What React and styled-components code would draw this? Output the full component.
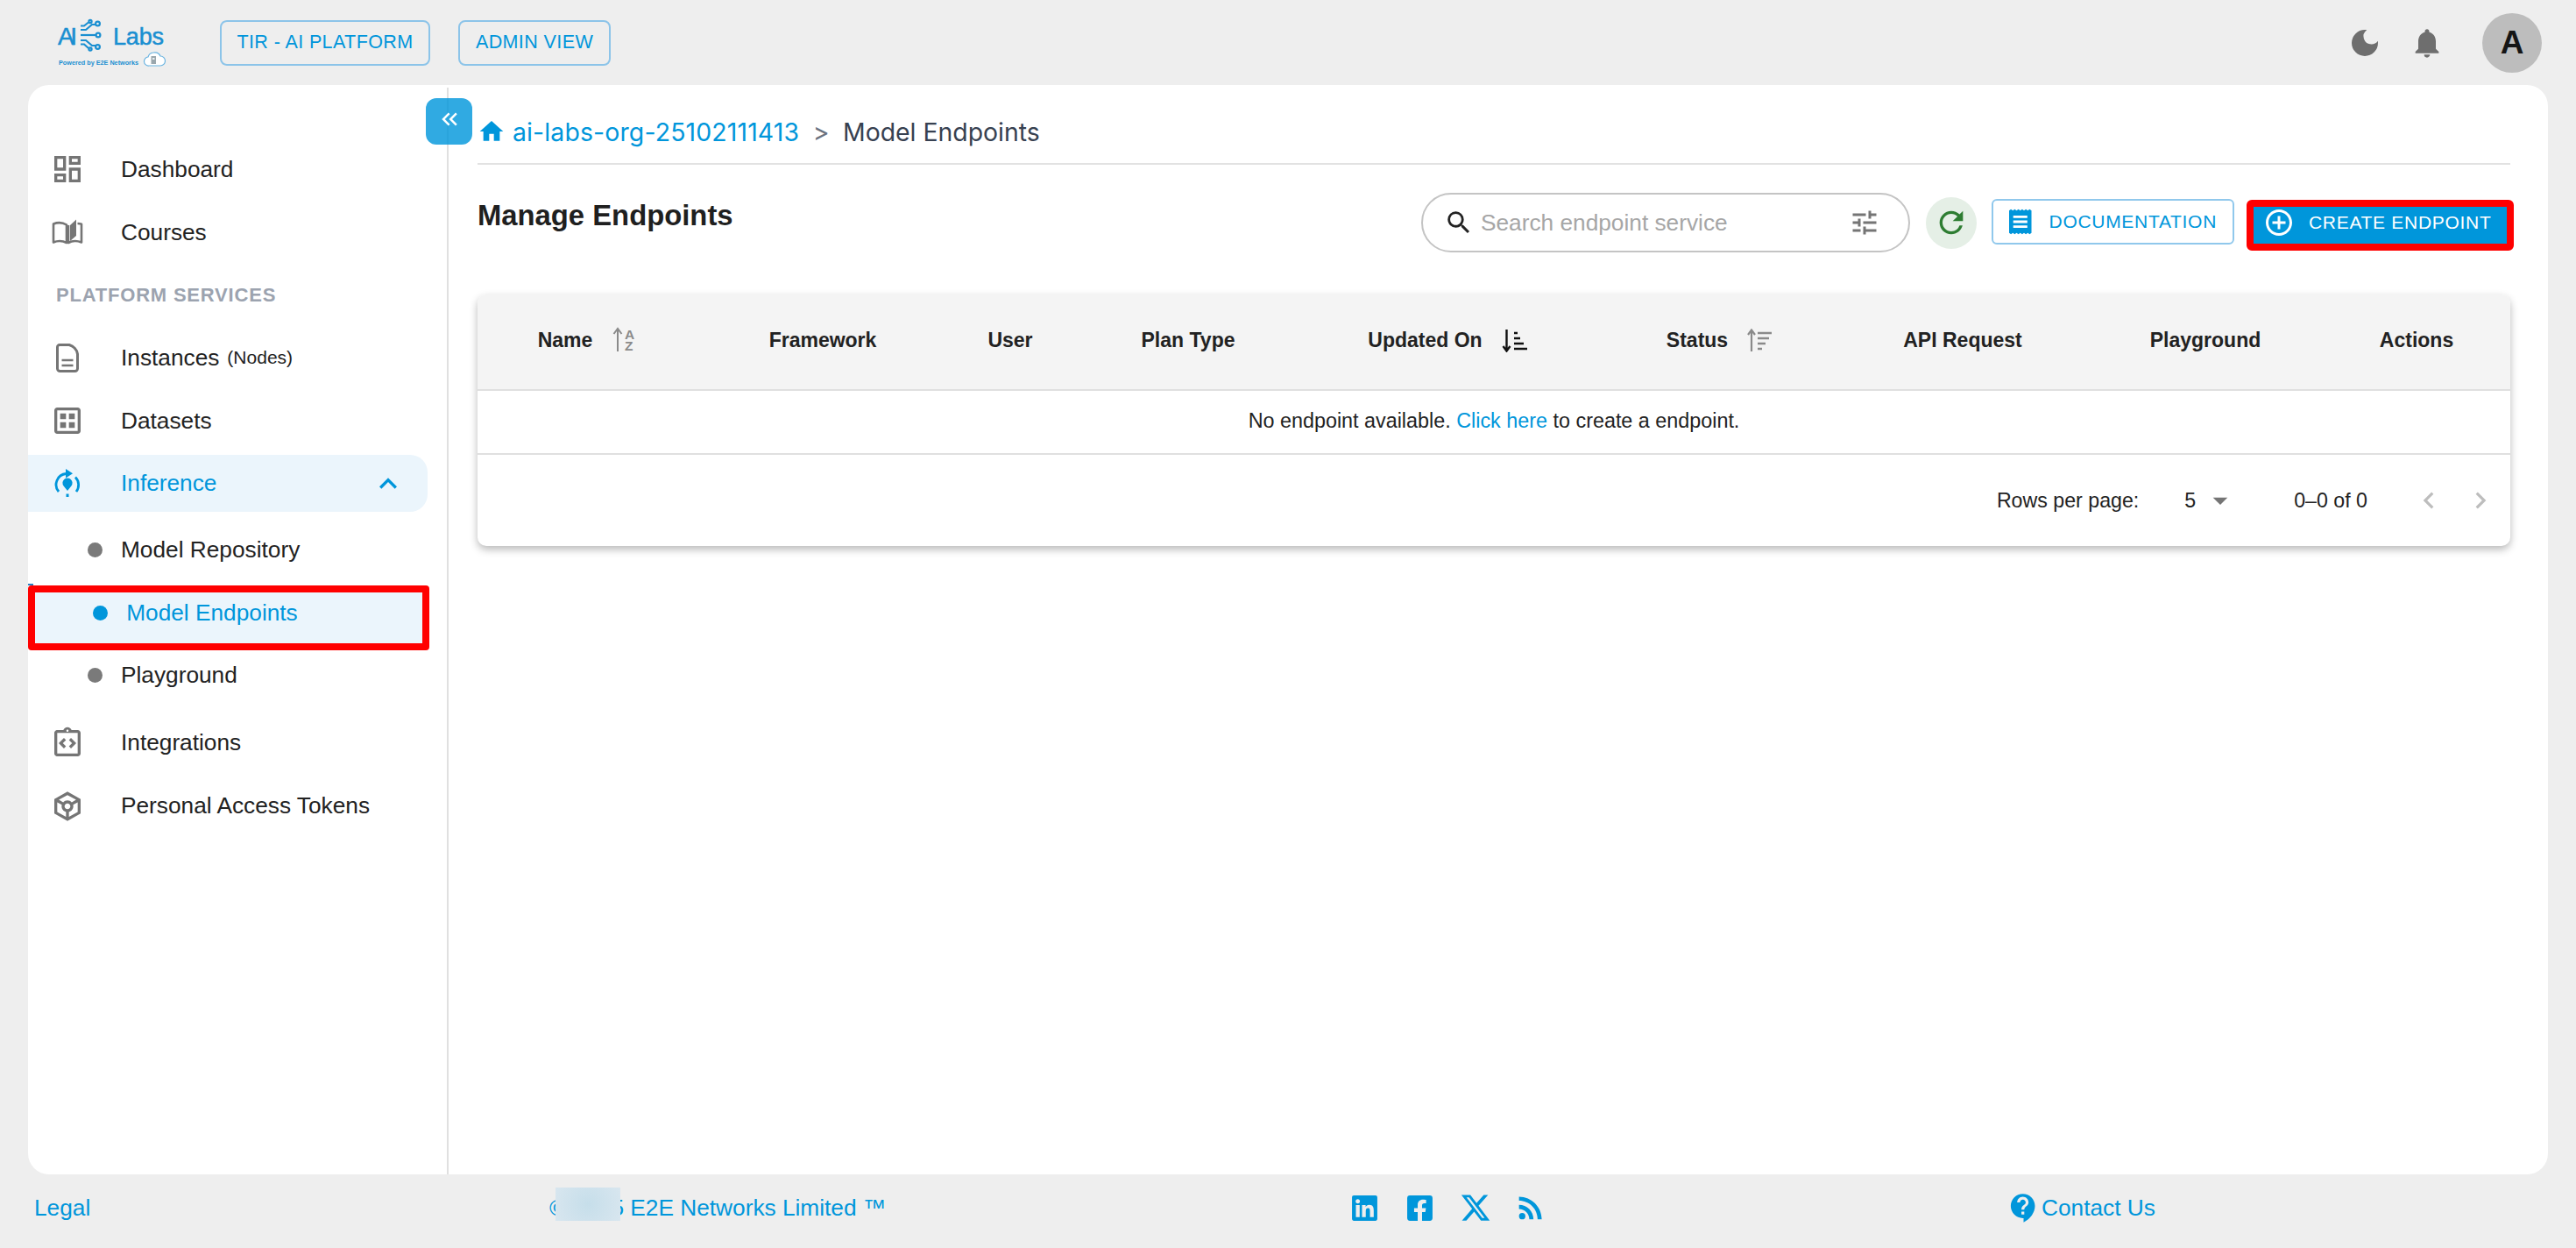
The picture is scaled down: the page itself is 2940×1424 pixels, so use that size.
import React from "react";
import styled, { createGlobalStyle } from "styled-components";
import {
  MdOutlineDashboard, MdOutlineDataset, MdOutlineIntegrationInstructions, MdOutlineToken,
  MdExpandLess, MdDarkMode, MdNotifications, MdKeyboardDoubleArrowLeft, MdHome, MdSearch,
  MdTune, MdRefresh, MdAddCircleOutline, MdArrowDropDown, MdChevronLeft, MdChevronRight,
  MdRssFeed, MdContactSupport,
} from "react-icons/md";
import { FaLinkedin, FaFacebookSquare } from "react-icons/fa";
import { FaXTwitter } from "react-icons/fa6";

const BLUE = "#0096db";
const SANS = '"Liberation Sans", Arial, sans-serif';

const Global = createGlobalStyle`
  html, body { margin: 0; height: 100%; overflow: hidden; background: #eeeeee; }
  #root { height: 100%; }
  * { box-sizing: border-box; }
`;

const Page = styled.div`
  height: 100vh;
  display: flex;
  flex-direction: column;
  font-family: ${SANS};
  color: #222;
  background: #eeeeee;
`;

/* Header */
const Header = styled.header`
  height: 97px;
  flex: none;
  display: flex;
  align-items: center;
  padding: 0 39px 0 50px;
`;
const LogoSvg = styled.svg`
  width: 180px;
  height: 80px;
  flex: none;
  margin-right: 21px;
`;
const HeaderChip = styled.button`
  height: 52px;
  width: ${(p) => p.$w}px;
  margin-right: 32px;
  padding: 0;
  border: 2px solid #8cc4e9;
  border-radius: 8px;
  background: transparent;
  color: ${BLUE};
  font: 21.5px ${SANS};
  letter-spacing: 0.4px;
`;
const HeaderRight = styled.div`
  margin-left: auto;
  display: flex;
  align-items: center;
  color: #6e6e6e;
  font-size: 40px;
  line-height: 0;
`;
const HeaderIcon = styled.span`
  display: flex;
  margin-right: ${(p) => p.$mr}px;
`;
const Avatar = styled.div`
  width: 68px;
  height: 68px;
  border-radius: 50%;
  background: #bdbdbd;
  color: #151515;
  display: flex;
  align-items: center;
  justify-content: center;
  font: 700 37px ${SANS};
  line-height: 1;
`;

/* Card */
const Card = styled.div`
  flex: 1;
  min-height: 0;
  margin: 0 32px;
  background: #fff;
  border-radius: 24px;
  display: flex;
  position: relative;
`;
const CollapseBtn = styled.button`
  position: absolute;
  left: 454px;
  top: 15px;
  width: 53px;
  height: 53px;
  padding: 0 0 6px;
  border: 0;
  border-radius: 12px;
  background: rgba(0, 150, 219, 0.81);
  color: #fff;
  display: flex;
  align-items: center;
  justify-content: center;
  font-size: 30px;
`;

/* Sidebar */
const Sidebar = styled.nav`
  width: 480px;
  flex: none;
  margin-top: 3px;
  padding-top: 57px;
  border-right: 2px solid #e0e0e0;
`;
const NavRow = styled.div`
  height: 72px;
  display: flex;
  align-items: center;
  padding-left: 25px;
  font-size: 26.25px;
  color: #222;
`;
const NavIcon = styled.span`
  width: 40px;
  height: 40px;
  flex: none;
  display: flex;
  align-items: center;
  justify-content: center;
  color: ${(p) => (p.$active ? BLUE : "#757575")};
  font-size: 40px;
  margin-right: 41px;
`;
const SectionLabel = styled.div`
  height: 71px;
  display: flex;
  align-items: center;
  padding-left: 32px;
  font-size: 22px;
  font-weight: 700;
  letter-spacing: 0.8px;
  color: #9ca3af;
`;
const Small = styled.span`
  font-size: 21px;
  margin-left: 9px;
`;
const InferenceRow = styled.div`
  height: 65px;
  width: 456px;
  margin-top: 3px;
  display: flex;
  align-items: center;
  padding: 0 25px;
  background: #ebf5fc;
  border-radius: 0 20px 20px 0;
  font-size: 26.25px;
  color: ${BLUE};
`;
const Chevron = styled.span`
  margin-left: auto;
  display: flex;
  font-size: 40px;
`;
const SubList = styled.div`
  margin-top: 8px;
  margin-bottom: 5px;
`;
const SubRow = styled.div`
  height: 71.5px;
  display: flex;
  align-items: center;
  padding-left: ${(p) => (p.$active ? 73.7 : 67.5)}px;
  font-size: 26.25px;
  color: ${(p) => (p.$active ? BLUE : "#222")};
  position: relative;
`;
const RedFrame = styled.span`
  position: absolute;
  left: 0;
  top: 4px;
  width: 458px;
  height: 74px;
  border: 8px solid #ff0000;
  border-radius: 4px;
  background: #ebf5fc;
  &::after {
    content: "";
    position: absolute;
    left: -8px;
    top: -10px;
    width: 6px;
    height: 2px;
    background: #2a7fc0;
  }
`;
const Dot = styled.span`
  width: 17px;
  height: 17px;
  flex: none;
  border-radius: 50%;
  background: ${(p) => (p.$active ? BLUE : "#7a7a7a")};
  margin-right: 21.5px;
  position: relative;
`;
const SubText = styled.span`
  position: relative;
`;

/* Content */
const Main = styled.main`
  flex: 1;
  min-width: 0;
  padding: 0 43px 0 33px;
`;
const Breadcrumb = styled.div`
  display: flex;
  align-items: center;
  height: 91px;
  padding: 35px 0 18px;
  border-bottom: 2px solid #e2e2e2;
  font: 28.4px Inter, ${SANS};
`;
const HomeIcon = styled.span`
  display: flex;
  color: ${BLUE};
  font-size: 32px;
  margin-right: 8px;
`;
const CrumbLink = styled.span`
  color: ${BLUE};
  letter-spacing: 0.15px;
`;
const CrumbSep = styled.span`
  color: #6b7280;
  margin: 0 15.5px;
`;
const CrumbCurrent = styled.span`
  color: #374151;
`;
const Toolbar = styled.div`
  margin-top: 32px;
  height: 68px;
  display: flex;
  align-items: flex-start;
  justify-content: space-between;
`;
const Title = styled.h1`
  margin: 0;
  font-size: 32.8px;
  line-height: 51px;
  font-weight: 700;
  color: #1f1f1f;
`;
const Actions = styled.div`
  height: 68px;
  display: flex;
  align-items: center;
  margin-right: -4px;
`;
const Search = styled.div`
  width: 558px;
  height: 68px;
  border: 2.5px solid #c4c4c4;
  border-radius: 34px;
  display: flex;
  align-items: center;
  padding: 0 32px 0 24px;
  background: #fff;
`;
const SearchIcon = styled.span`
  display: flex;
  font-size: 34px;
  color: #222;
  margin-right: 8px;
`;
const Placeholder = styled.span`
  flex: 1;
  font-size: 26.25px;
  color: #a6a6a6;
`;
const TuneIcon = styled.span`
  display: flex;
  font-size: 36px;
  color: #757575;
`;
const RefreshBtn = styled.button`
  width: 58px;
  height: 59px;
  margin: 0 17px 0 18px;
  padding: 0;
  border: 0;
  border-radius: 50%;
  background: #e5efe6;
  color: #2e7d32;
  display: flex;
  align-items: center;
  justify-content: center;
  font-size: 40px;
`;
const DocsBtn = styled.button`
  height: 52px;
  width: 277px;
  margin-top: -2px;
  margin-right: 14px;
  padding: 0 18px 0 18px;
  border: 2px solid #90c8ec;
  border-radius: 6px;
  background: #fff;
  color: ${BLUE};
  display: flex;
  align-items: center;
  gap: 20px;
  font: 21px ${SANS};
  letter-spacing: 0.7px;
  white-space: nowrap;
`;
const CreateBtn = styled.button`
  width: 305px;
  height: 58px;
  margin-top: 6px;
  padding: 0 12px 7px 11px;
  border: 8px solid #ff0000;
  border-radius: 6px;
  background: ${BLUE};
  color: #fff;
  display: flex;
  align-items: center;
  gap: 16px;
  font: 21px ${SANS};
  letter-spacing: 0.7px;
  white-space: nowrap;
`;
const CreateIcon = styled.span`
  display: flex;
  font-size: 36px;
`;

/* Table */
const TableCard = styled.section`
  margin-top: 48px;
  border-radius: 10px;
  background: #fff;
  box-shadow: 0 4px 10px rgba(0, 0, 0, 0.28);
  overflow: hidden;
`;
const HeadRow = styled.div`
  height: 110px;
  padding: 0 11px 0 0;
  background: #f4f4f4;
  border-bottom: 2px solid #e0e0e0;
  display: grid;
  grid-template-columns: 250px 288px 140px 266px 326px 294px 262px 292px 190px;
  align-items: center;
  justify-items: center;
  font-size: 23px;
  font-weight: 700;
  color: #222;
`;
const HeadCell = styled.div`
  display: flex;
  align-items: center;
  gap: 22px;
  padding-bottom: 4px;
`;
const EmptyRow = styled.div`
  height: 73px;
  border-bottom: 2px solid #e0e0e0;
  display: flex;
  align-items: center;
  justify-content: center;
  font-size: 23.35px;
  color: #222;
  padding-bottom: 2px;
`;
const LinkText = styled.a`
  color: ${BLUE};
  margin: 0 0.28em;
`;
const Pagination = styled.div`
  height: 104px;
  display: flex;
  align-items: center;
  justify-content: flex-end;
  padding: 0 15px 0 0;
  font-size: 23.2px;
  color: #222;
`;
const RowsValue = styled.span`
  margin-left: 52px;
`;
const SelectArrow = styled.span`
  display: flex;
  margin: 0 64px 0 8px;
  font-size: 40px;
  color: #757575;
`;
const PageArrow = styled.span`
  display: flex;
  font-size: 38px;
  color: #bdbdbd;
  margin-left: ${(p) => p.$ml}px;
`;

/* Footer */
const Footer = styled.footer`
  height: 84px;
  flex: none;
  padding: 0 0 8px 39px;
  display: grid;
  grid-template-columns: 588px 899px 764px auto;
  align-items: center;
  font-size: 26.25px;
  color: ${BLUE};
`;
const Copyright = styled.div`
  position: relative;
  white-space: nowrap;
`;
const BlurPatch = styled.span`
  position: absolute;
  left: 7px;
  top: -8px;
  width: 74px;
  height: 38px;
  background: radial-gradient(circle, #c6deea 0%, #d8e6ef 100%);
`;
const Socials = styled.div`
  display: grid;
  grid-template-columns: repeat(4, 63px);
  justify-items: center;
  align-items: center;
  height: 40px;
`;
const Contact = styled.div`
  display: flex;
  align-items: center;
  gap: 1px;
`;

const Logo = () => (
  <LogoSvg viewBox="0 0 180 80" aria-label="AI Labs">
    <g fill="#1a8fd1" stroke="#1a8fd1" strokeWidth="0.5" fontFamily={SANS}>
      <text x="16" y="41.5" fontSize="28" textLength="22" lengthAdjust="spacing">AI</text>
      <text x="79" y="41.5" fontSize="27" textLength="58" lengthAdjust="spacing">Labs</text>
    </g>
    <text x="17" y="65" fill="#1a8fd1" fontFamily={SANS} fontSize="7" fontWeight="700" textLength="91" lengthAdjust="spacingAndGlyphs">Powered by E2E Networks</text>
    <g fill="none" stroke="#1a8fd1" strokeWidth="2.2">
      <path d="M42 25 H48 L55 19 H59" />
      <path d="M42 20.5 H46 L51 16.5" />
      <path d="M42 31 H60" />
      <path d="M42 37 H48 L55 43 H59" />
      <path d="M42 41.5 H46 L51 46" />
      <circle cx="61.5" cy="18" r="2.4" />
      <circle cx="62" cy="31" r="2.4" />
      <circle cx="61.5" cy="44.5" r="2.4" />
      <circle cx="53" cy="15.5" r="1.6" />
      <circle cx="53" cy="47" r="1.6" />
    </g>
    <path d="M120 66 a5 5 0 0 1 -1 -10 a7 7 0 0 1 6 -5 q6 -1 8 4 a5.5 5.5 0 0 1 0 11 z" fill="#fff" stroke="#69b3e0" strokeWidth="1.2" />
    <rect x="122.5" y="55" width="5.5" height="9" fill="#9aa7ad" />
    <rect x="124" y="57" width="2.5" height="2" fill="#e8edf0" />
  </LogoSvg>
);

const CoursesIcon = () => (
  <svg width="36" height="32" viewBox="0 0 36 32" fill="none" stroke="currentColor" strokeWidth="2.6">
    <path d="M2 6.5 C7 4.5 12 4.5 17 7.5 V28 C12 25.5 7 25.5 2 27.5 Z" strokeLinejoin="round" />
    <path d="M21 8 L28 1.5 V20 L21 26 Z" fill="currentColor" stroke="none" />
    <path d="M29.5 6 C31 6 32.5 6.2 34 6.8 V27.5 C29 25.5 23.5 25.5 19 28 V8" strokeLinejoin="round" />
  </svg>
);
const InstancesIcon = () => (
  <svg width="26" height="33" viewBox="0 0 26 33" fill="none" stroke="currentColor" strokeWidth="3">
    <path d="M4 1.5 H15 C20 3 24 7 24.5 12 V28.5 a3 3 0 0 1 -3 3 H4.5 a3 3 0 0 1 -3 -3 V4 a2.5 2.5 0 0 1 2.5 -2.5 Z" strokeLinejoin="round" />
    <path d="M6.5 19 H19.5 M6.5 25 H19.5" strokeWidth="2.6" />
  </svg>
);
const InferenceIcon = () => (
  <svg width="30" height="33" viewBox="0 0 30 33" fill="none" stroke="currentColor" strokeWidth="2.8">
    <path d="M5 26 A12.5 12.5 0 0 1 13.5 5.5" />
    <path d="M25 26 A12.5 12.5 0 0 0 24 9.5" />
    <path d="M13 0 L21 5.3 L13 10.5 Z" fill="currentColor" stroke="none" />
    <path d="M15 25 L10.6 19.5 A5.6 5.6 0 1 1 19.4 19.5 Z" fill="currentColor" stroke="none" />
    <path d="M15 28.5 V32" strokeWidth="3" />
  </svg>
);
const DocIcon = () => (
  <svg width="27" height="30" viewBox="0 0 27 30">
    <path
      d="M0 1.5 L2.25 0 L4.5 1.5 L6.75 0 L9 1.5 L11.25 0 L13.5 1.5 L15.75 0 L18 1.5 L20.25 0 L22.5 1.5 L24.75 0 L27 1.5 V28.5 L24.75 30 L22.5 28.5 L20.25 30 L18 28.5 L15.75 30 L13.5 28.5 L11.25 30 L9 28.5 L6.75 30 L4.5 28.5 L2.25 30 L0 28.5 Z"
      fill={BLUE}
    />
    <path d="M5 9 H22 M5 15 H22 M5 21 H22" stroke="#fff" strokeWidth="3" />
  </svg>
);
const SortAlpha = () => (
  <svg width="28" height="32" viewBox="0 0 28 32" fill="#8a8a8a" fontFamily={SANS} fontWeight="700" fontSize="15.5">
    <path d="M7 29 V4 M2.5 9 L7 3 L11.5 9" fill="none" stroke="#8a8a8a" strokeWidth="2" />
    <text x="15" y="15">A</text>
    <text x="15" y="28">Z</text>
  </svg>
);
const SortDown = () => (
  <svg width="29" height="27" viewBox="0 0 29 27" fill="none" stroke="#111" strokeWidth="2.4">
    <path d="M5.5 1 V25 M1.5 20 L5.5 25.5 L9.5 20" />
    <path d="M14 5 H18 M14 11 H21 M14 17 H25 M14 23 H29" strokeWidth="2.6" />
  </svg>
);
const SortUp = () => (
  <svg width="28" height="27" viewBox="0 0 28 27" fill="none" stroke="#8a8a8a" strokeWidth="2.2">
    <path d="M5 26 V2 M1 7 L5 1.5 L9 7" />
    <path d="M12 5 H28 M12 11 H25 M12 17 H21 M12 23 H17" strokeWidth="2.6" />
  </svg>
);

const columns = [
  ["Name", <SortAlpha key="a" />],
  ["Framework"],
  ["User"],
  ["Plan Type"],
  ["Updated On", <SortDown key="d" />],
  ["Status", <SortUp key="u" />],
  ["API Request"],
  ["Playground"],
  ["Actions"],
];

export default function App() {
  return (
    <Page>
      <Global />
      <Header>
        <Logo />
        <HeaderChip $w={240}>TIR - AI PLATFORM</HeaderChip>
        <HeaderChip $w={174}>ADMIN VIEW</HeaderChip>
        <HeaderRight>
          <HeaderIcon $mr={31}><MdDarkMode /></HeaderIcon>
          <HeaderIcon $mr={43}><MdNotifications /></HeaderIcon>
          <Avatar>A</Avatar>
        </HeaderRight>
      </Header>

      <Card>
        <CollapseBtn aria-label="Collapse"><MdKeyboardDoubleArrowLeft /></CollapseBtn>
        <Sidebar>
          <NavRow><NavIcon><MdOutlineDashboard /></NavIcon>Dashboard</NavRow>
          <NavRow><NavIcon><CoursesIcon /></NavIcon>Courses</NavRow>
          <SectionLabel>PLATFORM SERVICES</SectionLabel>
          <NavRow><NavIcon><InstancesIcon /></NavIcon>Instances<Small>(Nodes)</Small></NavRow>
          <NavRow><NavIcon><MdOutlineDataset /></NavIcon>Datasets</NavRow>
          <InferenceRow>
            <NavIcon $active><InferenceIcon /></NavIcon>Inference
            <Chevron><MdExpandLess /></Chevron>
          </InferenceRow>
          <SubList>
            <SubRow><Dot /><SubText>Model Repository</SubText></SubRow>
            <SubRow $active><RedFrame /><Dot $active /><SubText>Model Endpoints</SubText></SubRow>
            <SubRow><Dot /><SubText>Playground</SubText></SubRow>
          </SubList>
          <NavRow><NavIcon><MdOutlineIntegrationInstructions /></NavIcon>Integrations</NavRow>
          <NavRow><NavIcon><MdOutlineToken /></NavIcon>Personal Access Tokens</NavRow>
        </Sidebar>

        <Main>
          <Breadcrumb>
            <HomeIcon><MdHome /></HomeIcon>
            <CrumbLink>ai-labs-org-25102111413</CrumbLink>
            <CrumbSep>&gt;</CrumbSep>
            <CrumbCurrent>Model Endpoints</CrumbCurrent>
          </Breadcrumb>

          <Toolbar>
            <Title>Manage Endpoints</Title>
            <Actions>
              <Search>
                <SearchIcon><MdSearch /></SearchIcon>
                <Placeholder>Search endpoint service</Placeholder>
                <TuneIcon><MdTune /></TuneIcon>
              </Search>
              <RefreshBtn aria-label="Refresh"><MdRefresh /></RefreshBtn>
              <DocsBtn><DocIcon />DOCUMENTATION</DocsBtn>
              <CreateBtn><CreateIcon><MdAddCircleOutline /></CreateIcon>CREATE ENDPOINT</CreateBtn>
            </Actions>
          </Toolbar>

          <TableCard>
            <HeadRow>
              {columns.map(([label, icon]) => (
                <HeadCell key={label}>{label}{icon}</HeadCell>
              ))}
            </HeadRow>
            <EmptyRow>
              No endpoint available.<LinkText>Click here</LinkText>to create a endpoint.
            </EmptyRow>
            <Pagination>
              <span>Rows per page:</span>
              <RowsValue>5</RowsValue>
              <SelectArrow><MdArrowDropDown /></SelectArrow>
              <span>0–0 of 0</span>
              <PageArrow $ml={51}><MdChevronLeft /></PageArrow>
              <PageArrow $ml={21}><MdChevronRight /></PageArrow>
            </Pagination>
          </TableCard>
        </Main>
      </Card>

      <Footer>
        <span>Legal</span>
        <Copyright>© 2025 E2E Networks Limited ™<BlurPatch /></Copyright>
        <Socials>
          <FaLinkedin size={33} />
          <FaFacebookSquare size={33} />
          <FaXTwitter size={36} />
          <MdRssFeed size={40} />
        </Socials>
        <Contact><MdContactSupport size={39} />Contact Us</Contact>
      </Footer>
    </Page>
  );
}
